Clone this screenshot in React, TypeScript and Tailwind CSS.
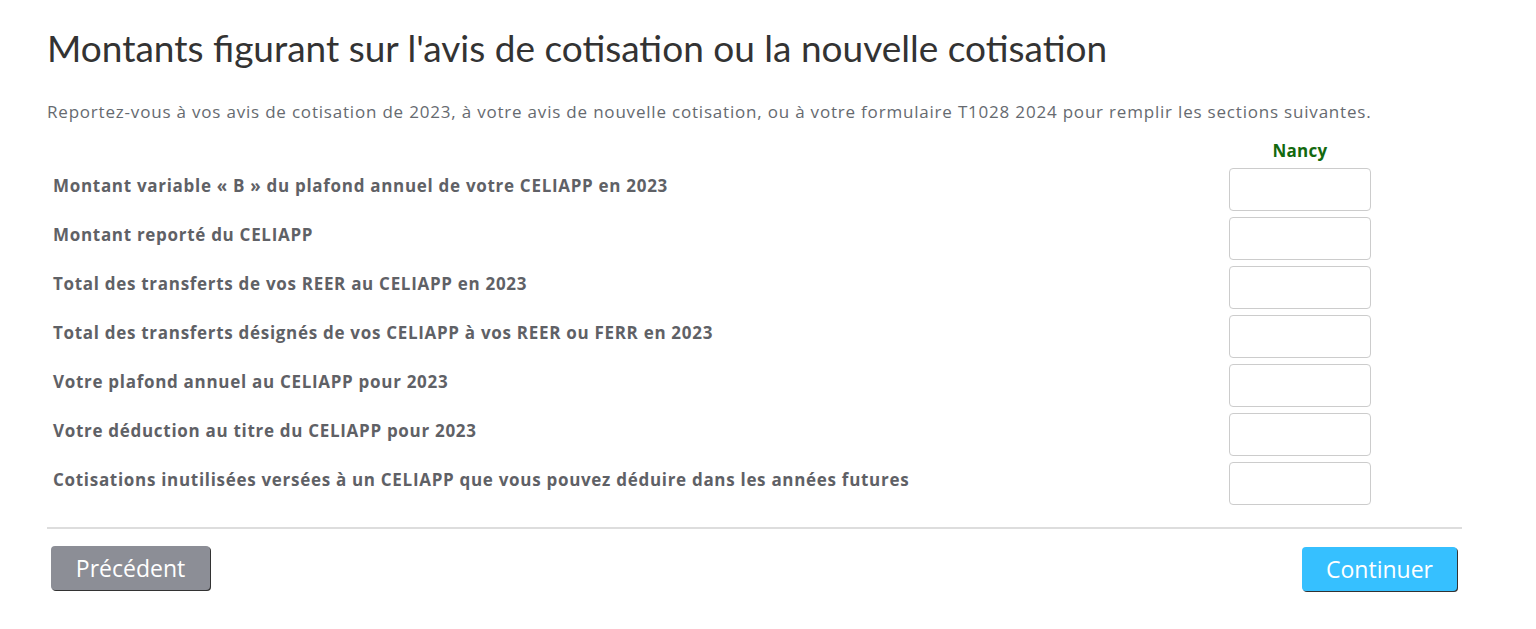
const rows = [
  'Montant variable « B » du plafond annuel de votre CELIAPP en 2023',
  'Montant reporté du CELIAPP',
  'Total des transferts de vos REER au CELIAPP en 2023',
  'Total des transferts désignés de vos CELIAPP à vos REER ou FERR en 2023',
  'Votre plafond annuel au CELIAPP pour 2023',
  'Votre déduction au titre du CELIAPP pour 2023',
  'Cotisations inutilisées versées à un CELIAPP que vous pouvez déduire dans les années futures',
]

export default function App() {
  return (
    <div className="bg-white min-h-screen font-['Open_Sans',sans-serif]">
      <div className="w-[1415px] ml-[47px] pt-[26px]">
        <h1 className="font-['Lato',sans-serif] text-[37px] leading-[44px] text-[#333333]">
          Montants figurant sur l'avis de cotisation ou la nouvelle cotisation
        </h1>
        <p className="mt-[30px] text-[17px] leading-[24px] tracking-[0.8px] text-[#666a70]">
          Reportez-vous à vos avis de cotisation de 2023, à votre avis de nouvelle cotisation, ou à votre formulaire T1028 2024 pour remplir les sections suivantes.
        </p>
        <div className="mt-[17px] flex justify-end pr-[91px]">
          <div className="w-[142px] text-center text-[17px] font-bold text-[#13690f] leading-[20px] tracking-[0.3px]">Nancy</div>
        </div>
        <div className="mt-[7px] flex flex-col gap-[6px]">
          {rows.map((r) => (
            <div key={r} className="flex items-center justify-between pl-[6px] pr-[91px]">
              <span className="text-[17px] font-bold text-[#5f6166] tracking-[0.7px] -mt-[7px]">{r}</span>
              <input className="w-[142px] h-[43px] rounded-[4px] border border-[#cccccc] bg-white" />
            </div>
          ))}
        </div>
        <div className="mt-[22px] border-t-2 border-[#dddddd]" />
        <div className="mt-[18px] flex justify-between px-[4px] pr-[5px]">
          <button className="w-[159px] h-[44px] rounded-[4px] bg-[#8c8e96] text-white text-[23px] shadow-[1px_1px_0_#333] -mt-[1px]">
            Précédent
          </button>
          <button className="w-[155px] h-[44px] rounded-[4px] bg-[#36c0ff] text-white text-[23px] shadow-[1px_1px_0_#333]">
            Continuer
          </button>
        </div>
      </div>
    </div>
  )
}
